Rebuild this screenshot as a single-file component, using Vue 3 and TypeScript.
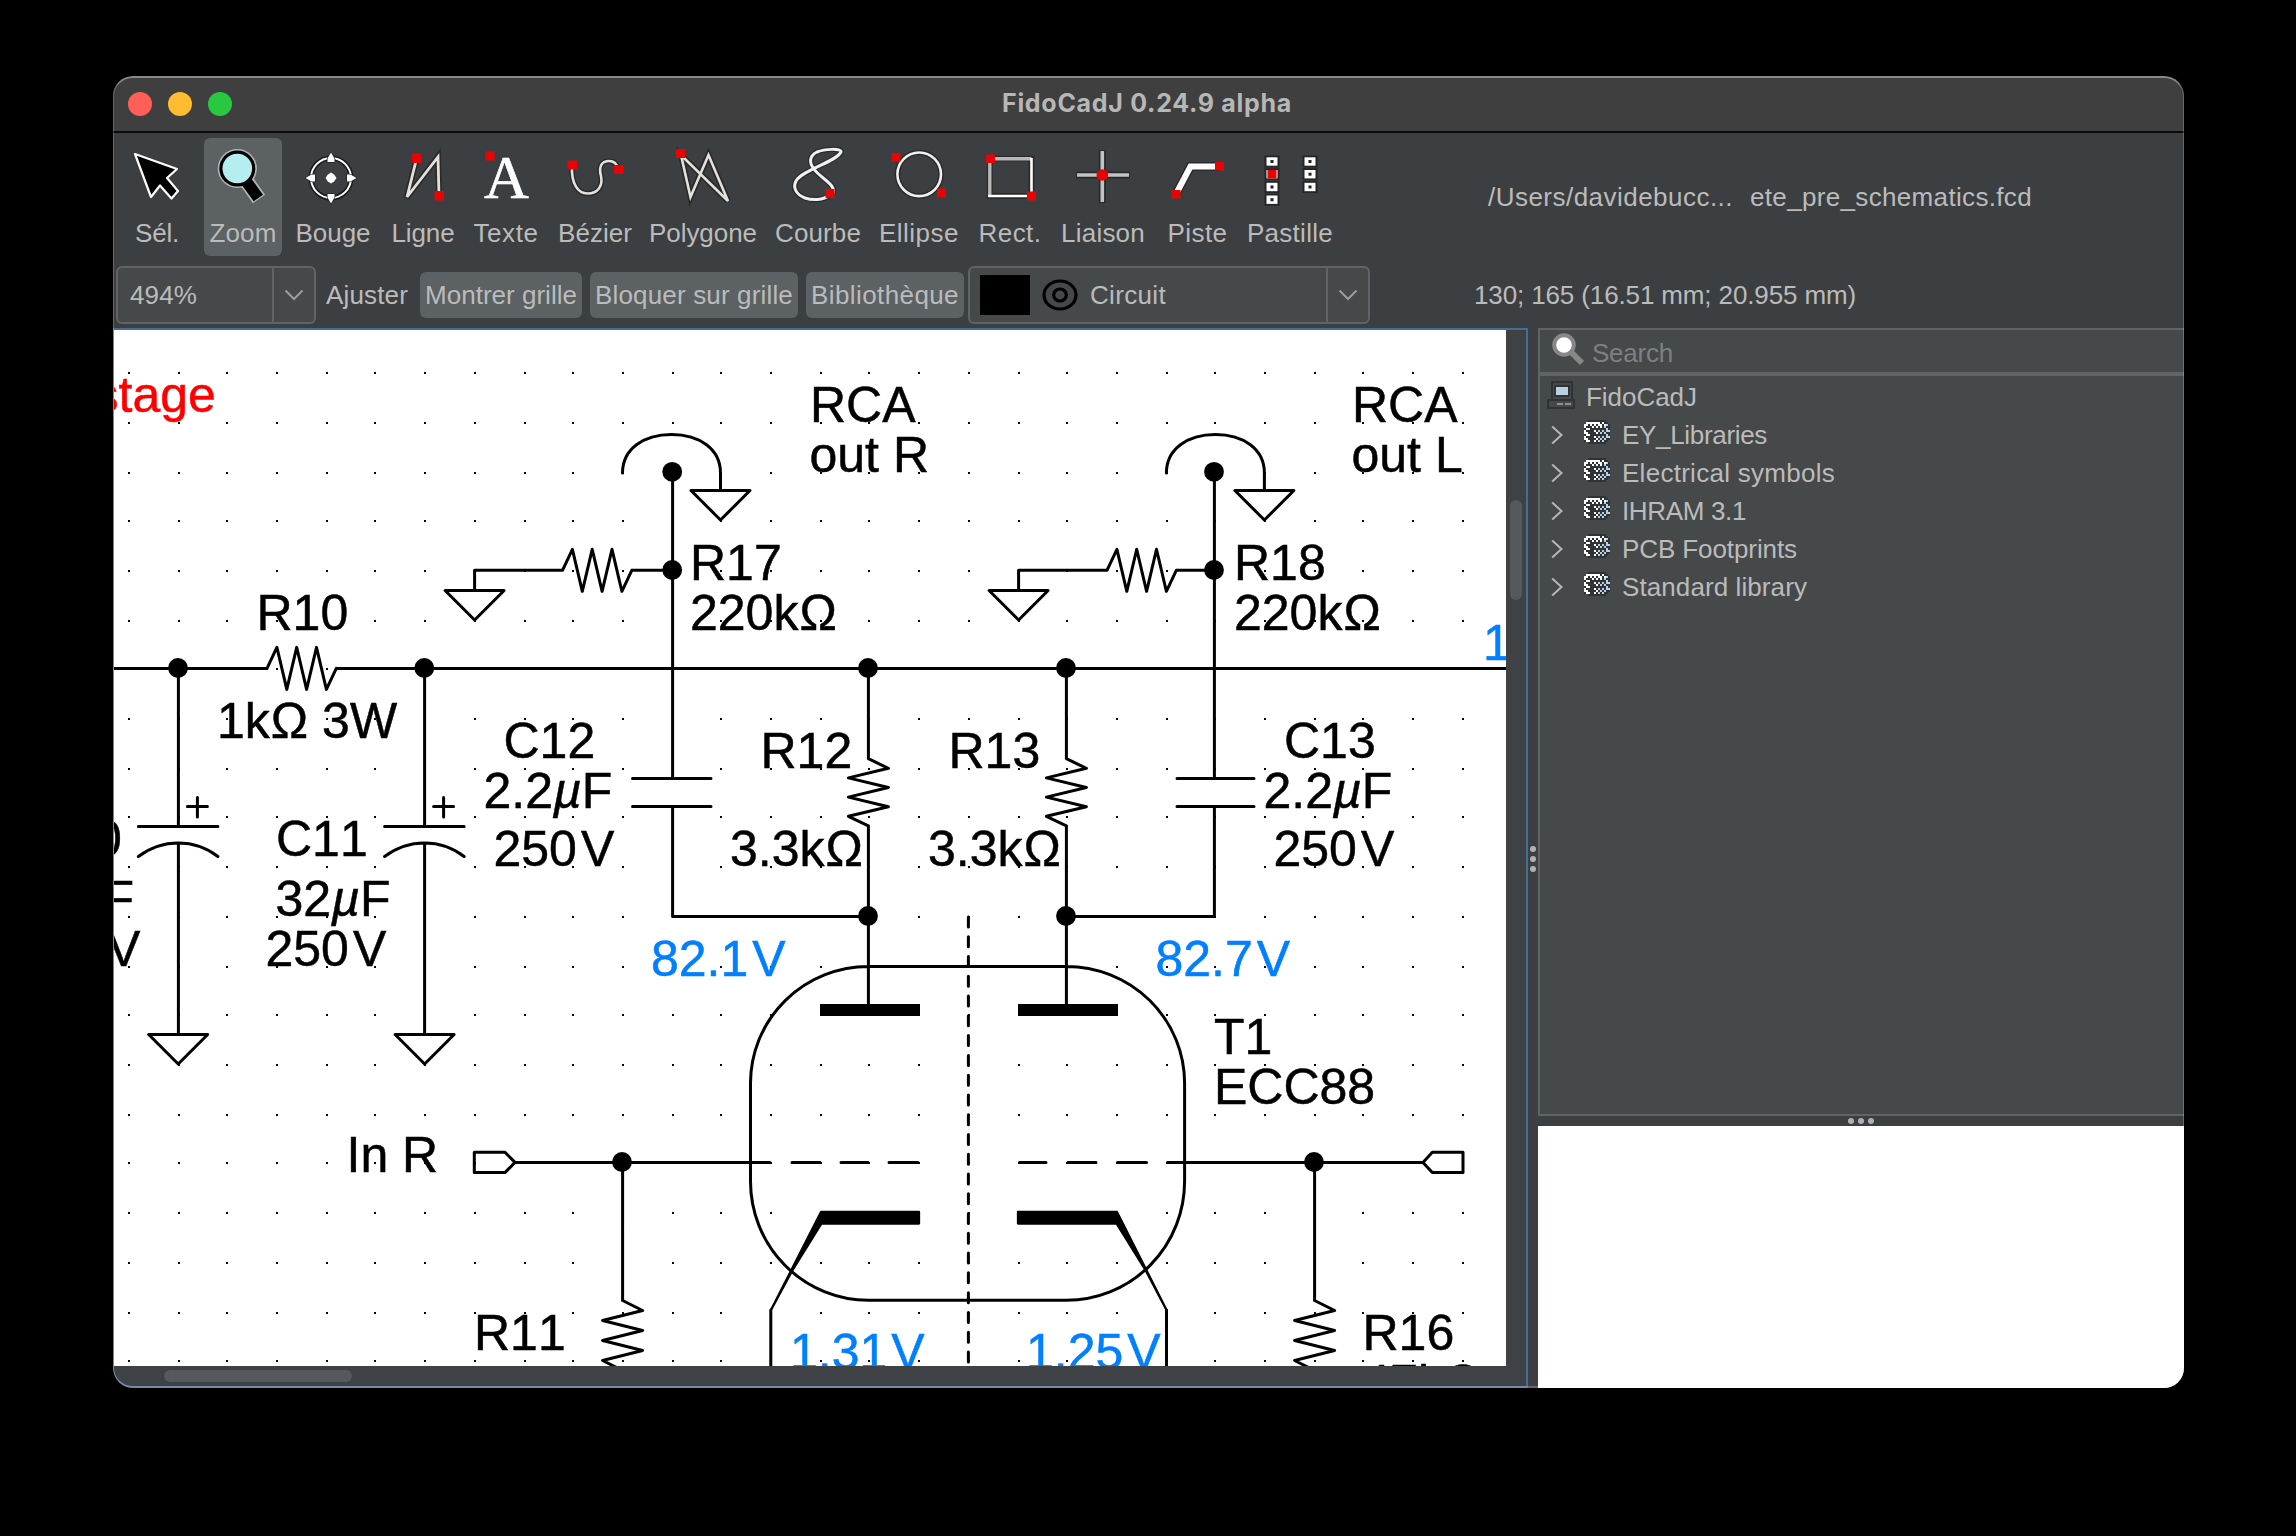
<script setup lang="ts">
import type { Directive } from 'vue'

interface Tool { name: string; w: number; gap: number; cx: number; tw: number; active?: boolean }
interface Label { t: string; x: number; y: number; c?: string }

// Adjusts tracking so that a caption occupies the given advance width.
const vFit: Directive<HTMLElement, number> = {
  mounted(el, { value }) {
    const n = (el.textContent ?? '').length
    const natural = el.getBoundingClientRect().width
    if (n > 1) el.style.letterSpacing = `${(value - natural) / n}px`
  },
}

const tools: Tool[] = [
  { name: 'Sél.', w: 54, gap: 17, cx: 157, tw: 44 },
  { name: 'Zoom', w: 78, gap: 20, cx: 243, tw: 67, active: true },
  { name: 'Bouge', w: 84, gap: 9, cx: 333, tw: 75 },
  { name: 'Ligne', w: 72, gap: 12, cx: 423, tw: 63 },
  { name: 'Texte', w: 76, gap: 9, cx: 506, tw: 65 },
  { name: 'Bézier', w: 84, gap: 9, cx: 595, tw: 74 },
  { name: 'Polygone', w: 116, gap: 8, cx: 703, tw: 108 },
  { name: 'Courbe', w: 96, gap: 9, cx: 818, tw: 86 },
  { name: 'Ellipse', w: 90, gap: 8, cx: 919, tw: 80 },
  { name: 'Rect.', w: 72, gap: 10, cx: 1010, tw: 63 },
  { name: 'Liaison', w: 92, gap: 11, cx: 1103, tw: 84 },
  { name: 'Piste', w: 69, gap: 14, cx: 1197, tw: 60 },
  { name: 'Pastille', w: 96, gap: 10, cx: 1290, tw: 86 },
]

const pads = [[1272, 160.5], [1272, 173.2], [1272, 186], [1272, 198.7], [1310, 160.5], [1310, 173.2], [1310, 186]]

const libs = [
  { name: 'EY_Libraries', w: 145 },
  { name: 'Electrical symbols', w: 213 },
  { name: 'IHRAM 3.1', w: 124 },
  { name: 'PCB Footprints', w: 175 },
  { name: 'Standard library', w: 185 },
]

const stack = [
  '..DDDDDDDDD..',
  '.WWWWWWWDWDD.',
  'WWDWDWDWWDWBD',
  'WDDDWDWDWDBDD',
  'DWWDDDDDDDDBD',
  'WDDDDWDBDBDBB',
  'WWDDDDWDBDBDD',
  'DWWDDDDDDDDBD',
  'WDDDDWDBDBDBB',
  'WWDDDDWDBDBDD',
  'DWWDDWDBDBDD.',
  '..DDDDDDDDD..',
]
const tint: Record<string, string> = { D: '#303335', W: '#ffffff', B: '#b8cfe5' }
const cells = stack.flatMap((row, y) =>
  [...row].map((ch, x) => ({ x: x * 2, y: y * 2, f: tint[ch] })).filter((c) => c.f),
)

const gridDots: { x: number; y: number }[] = []
for (let j = 0; j < 21; j++)
  for (let i = 0; i < 28; i++)
    gridDots.push({ x: 128 + 2 * Math.floor(24.7 * i + 0.45), y: 372 + 2 * Math.floor(24.7 * j + 0.7) })

const resH = (x: number, y: number) =>
  `M${x} ${y}` + [-21, 21, -21, 21, -21, 21, 0].map((d, i) => `L${x + 9.9 * (i + 1)} ${y + d}`).join('')
const resV = (x: number, y: number, step = 9.6) =>
  `M${x} ${y}` + [20, -20, 20, -20, 20, -20, 0].map((d, i) => `L${x + d} ${y + step * (i + 1)}`).join('')
const gnd = (x: number, y: number) => `M${x - 29.5} ${y}H${x + 29.5}L${x} ${y + 29.5}Z`
const rca = (l: number, r: number) => {
  const m = (l + r) / 2
  return `M${l} 473C${l} 449 ${m - 28} 434.5 ${m} 434.5S${r} 449 ${r} 473V490`
}
const polar = (x: number) =>
  `M${x} 668V826.5M${x - 40} 826.5H${x + 39.5}M${x - 40} 856.5Q${x - 22} 843 ${x} 843T${x + 39.5} 856.5M${x} 843V1034.5M${x + 9} 806.5H${x + 29}M${x + 19} 797.5V817`

const wires = [
  'M114 668.4H267', resH(267, 668.4), 'M336.6 668.4H1506',
  rca(622.5, 720.5), rca(1166.4, 1264.4),
  'M672.6 472V778.5M632.5 778.5H711M632.5 806.5H711M672.6 806.5V916.5H868',
  'M1214.4 472V778.5M1177 778.5H1254M1177 806.5H1254M1214.4 806.5V916.5H1066',
  gnd(720.5, 490.5), gnd(1264.4, 490.5),
  'M474.6 590V570.3H562.5', resH(562.5, 570.3), 'M632 570.3H672', gnd(474.6, 590.5),
  'M1018.6 590V570.3H1107', resH(1107, 570.3), 'M1176.5 570.3H1214', gnd(1018.6, 590.5),
  polar(178.4), gnd(178.2, 1034.5), polar(424.6), gnd(424.6, 1034.5),
  'M868.4 668V758.7', resV(868.4, 758.7), 'M868.4 826V1004',
  'M1066.4 668V758.7', resV(1066.4, 758.7), 'M1066.4 826V1004',
  'M868.4 966.4H1066.4A118.2 117 0 0 1 1184.6 1083V1181A118.2 119 0 0 1 1066.4 1300.3H868.4A118 119 0 0 1 750.5 1181V1083A118 117 0 0 1 868.4 966.4Z',
  'M474.3 1152.3H505L515 1162.4L505 1172.6H474.3ZM515 1162.4H770',
  'M792 1162.4H820M841 1162.4H868M889 1162.4H918M1019.5 1162.4H1046M1068 1162.4H1096M1117.5 1162.4H1146.5M1167.5 1162.4H1423',
  'M1463 1152.3H1432.3L1423 1162.4L1432.3 1172.6H1463Z',
  'M770.8 1310V1366M1166.5 1310V1366',
  'M622.6 1162V1300.5', resV(622.6, 1300.5, 10), 'M1314.6 1162V1300.5', resV(1314.6, 1300.5, 10),
].join('')

const nodes = [[672.2, 471.8], [672.2, 570], [1214, 471.8], [1214, 570], [178, 668], [424.3, 668], [868, 668], [1066, 668],
  [868, 916], [1066, 916], [622, 1162], [1314, 1162]]

const B = '#007fff'
const labels: Label[] = [
  { t: 'stage', x: 93.5, y: 412, c: '#ff0000' },
  { t: 'RCA', x: 810, y: 422 }, { t: 'out R', x: 809.5, y: 472 },
  { t: 'RCA', x: 1352, y: 422 }, { t: 'out L', x: 1351.5, y: 472 },
  { t: 'R17', x: 690, y: 580 }, { t: '220kΩ', x: 690, y: 630 },
  { t: 'R18', x: 1234, y: 580 }, { t: '220kΩ', x: 1234, y: 630 },
  { t: 'R10', x: 256.5, y: 630 }, { t: '1kΩ 3W', x: 217, y: 738 },
  { t: 'C12', x: 503.5, y: 758 }, { t: '2.2µF', x: 483.5, y: 808 }, { t: '250V', x: 493.5, y: 866 },
  { t: 'C11', x: 276, y: 856 }, { t: '32µF', x: 275.5, y: 916 }, { t: '250V', x: 265.5, y: 966 },
  { t: 'C10', x: 30, y: 856 }, { t: '32µF', x: 19, y: 916 }, { t: '250V', x: 19.5, y: 966 },
  { t: 'R12', x: 760.5, y: 768 }, { t: '3.3kΩ', x: 730, y: 866 },
  { t: 'R13', x: 948.5, y: 768 }, { t: '3.3kΩ', x: 928, y: 866 },
  { t: 'C13', x: 1284, y: 758 }, { t: '2.2µF', x: 1263.5, y: 808 }, { t: '250V', x: 1273.5, y: 866 },
  { t: '82.1V', x: 651, y: 976, c: B }, { t: '82.7V', x: 1155.5, y: 976, c: B },
  { t: 'T1', x: 1214, y: 1054 }, { t: 'ECC88', x: 1214, y: 1104 },
  { t: 'In R', x: 346.5, y: 1172 }, { t: 'R11', x: 474, y: 1350 }, { t: 'R16', x: 1362.5, y: 1350 },
  { t: '47kΩ', x: 1362.5, y: 1400 }, { t: '1.31V', x: 790, y: 1369, c: B }, { t: '1.25V', x: 1026, y: 1369, c: B },
  { t: '1', x: 1483, y: 660, c: B },
]
const split = (t: string) => t.split(/([µVΩ])/).filter((s) => s)
const shift = (s: string) => (s === 'V' ? 4 : s === 'Ω' ? 1 : 0)
</script>

<template>
  <div class="desktop">
    <div class="window">
      <header class="titlebar">
        <i class="light red"></i><i class="light amber"></i><i class="light green"></i>
        <h1><span v-fit="290">FidoCadJ 0.24.9 alpha</span></h1>
      </header>

      <div class="tools">
        <button v-for="t in tools" :key="t.name" class="tool" :class="{ active: t.active }"
          :style="{ width: t.w + 'px', marginLeft: t.gap + 'px' }">
          <svg class="ticon" width="68" height="68" :viewBox="`${t.cx - 34} 140 68 68`">
            <path v-if="t.name === 'Sél.'" d="M135 153L177 168L167 177L178 190L171.5 197.5L160 184.5L151 196Z" fill="#000" stroke="#fff" stroke-width="2.2" stroke-linejoin="round" />
            <g v-else-if="t.name === 'Zoom'">
              <path d="M247 181L259 198" stroke="#b4b4b4" stroke-width="15" />
              <circle cx="237.3" cy="167.5" r="19.6" fill="#b4b4b4" />
              <circle cx="237.3" cy="167.5" r="18" fill="#000" />
              <path d="M246 180L258.3 197" stroke="#000" stroke-width="11.5" />
              <circle cx="237.3" cy="167.5" r="14.8" fill="#b4eeee" />
            </g>
            <g v-else-if="t.name === 'Bouge'">
              <circle cx="331" cy="177" r="20" fill="none" stroke="#191b1c" stroke-width="5" />
              <circle cx="331" cy="177" r="20" fill="none" stroke="#fff" stroke-width="2" />
              <path d="M331 151.500l3.500 6v3.500h-7v-3.500zM331 202.500l3.500-6v-3.500h-7v3.500zM305.500 177l6-3.500h3.500v7h-3.500zM356.500 177l-6-3.500h-3.500v7h3.500z" fill="#fff" stroke="#191b1c" stroke-width="1.200" paint-order="stroke" />
              <path d="M331 171.500l3.300 2.200 2.200 3.300-2.200 3.300-3.300 2.200-3.300-2.200-2.200-3.300 2.200-3.300z" fill="#fff" />
            </g>
            <g v-else-if="t.name === 'Ligne'" fill="none">
              <path d="M416.500 158L406.500 197L438 155.500L439 195" stroke="#2a2a2a" stroke-width="6" />
              <path d="M416.500 158L407 196L438 156L439 195" stroke="#e4e0dc" stroke-width="2.800" />
              <path d="M412 152.500h9.500v9.500h-9.500zM434.500 190h9.500v9.500h-9.500z" fill="#e80404" />
            </g>
            <g v-else-if="t.name === 'Texte'">
              <text x="484" y="197" class="serif">A</text>
              <path d="M485.500 150.500h9v9h-9z" fill="#e80404" />
            </g>
            <g v-else-if="t.name === 'Bézier'" fill="none">
              <path d="M572 164C571 183 578 192.500 587.500 192.500C598 192.500 603 185 601 175C598 164 603 160 609 160C614 160 617 163 618 168" stroke="#2a2a2a" stroke-width="5.500" />
              <path d="M572 164C571 183 578 192.500 587.500 192.500C598 192.500 603 185 601 175C598 164 603 160 609 160C614 160 617 163 618 168" stroke="#e4e0dc" stroke-width="2.600" />
              <path d="M567.500 159.500h9.500v9h-9.500zM614 164h9.500v9h-9.500z" fill="#e80404" />
            </g>
            <g v-else-if="t.name === 'Polygone'" fill="none">
              <path d="M681 154L690.500 196L708.500 154L728 200Z" stroke="#2a2a2a" stroke-width="6" />
              <path d="M681 154L690.500 196L708.500 154L728 200Z" stroke="#e4e0dc" stroke-width="2.600" />
              <path d="M676 148h9v9h-9z" fill="#e80404" />
            </g>
            <g v-else-if="t.name === 'Courbe'" fill="none">
              <path d="M830 194C823 199.500 812 199.500 805 197C795 193 793 186 796 180C802 169 836 161 841 151C842 147 824 148 817 151C809 155 809 162 814 168C820 177 836 183 833 192" stroke="#2a2a2a" stroke-width="5.500" />
              <path d="M830 194C823 199.500 812 199.500 805 197C795 193 793 186 796 180C802 169 836 161 841 151C842 147 824 148 817 151C809 155 809 162 814 168C820 177 836 183 833 192" stroke="#f0f0f0" stroke-width="3" />
              <path d="M825.500 188h9v9h-9z" fill="#e80404" />
            </g>
            <g v-else-if="t.name === 'Ellipse'" fill="none">
              <circle cx="919.200" cy="173.300" r="21.800" stroke="#2a2a2a" stroke-width="5.500" />
              <circle cx="919.200" cy="173.300" r="21.800" stroke="#f0f0f0" stroke-width="2.600" />
              <path d="M891.500 152h9v8.500h-9zM937 187.500h9v9h-9z" fill="#e80404" />
            </g>
            <g v-else-if="t.name === 'Rect.'" fill="none">
              <path d="M989.800 157.700H1031.500V195H989.800Z" stroke="#2a2a2a" stroke-width="5.800" />
              <path d="M989.800 195V157.700H1031.500" stroke="#b8b8b8" stroke-width="3.400" />
              <path d="M1031.500 157V195H988" stroke="#fff" stroke-width="2.600" />
              <path d="M986 153.500h9v8.500h-9zM1027 190.500h9v9h-9z" fill="#e80404" />
            </g>
            <g v-else-if="t.name === 'Liaison'">
              <path d="M1076 174H1130M1102.300 149V202" stroke="#26282a" stroke-width="7" />
              <path d="M1077 174H1129M1102.300 150V201" stroke="#c2c2c2" stroke-width="3.600" />
              <circle cx="1102.300" cy="174" r="5.800" fill="#e80404" />
            </g>
            <g v-else-if="t.name === 'Piste'" fill="none">
              <path d="M1175 193L1189.500 165.500H1219" stroke="#2a2a2a" stroke-width="9" />
              <path d="M1175 193L1189.500 165.500H1219" stroke="#fff" stroke-width="6" />
              <path d="M1170.500 189h9v8.500h-9zM1214 161h9v8.500h-9z" fill="#e80404" />
            </g>
            <g v-else>
              <g v-for="(p, i) in pads" :key="i">
                <rect :x="p[0] - 7.500" :y="p[1] - 6" width="15" height="12" fill="#232526" />
                <rect :x="p[0] - 5.500" :y="p[1] - 4.200" width="11" height="8.400" fill="#fff" />
                <rect v-if="i === 1" :x="p[0] - 4.500" :y="p[1] - 4.200" width="9" height="8.400" fill="#e80404" />
                <rect v-else :x="p[0] - 1.500" :y="p[1] - 1.500" width="3" height="3" fill="#222" />
              </g>
            </g>
          </svg>
          <span v-fit="t.tw">{{ t.name }}</span>
        </button>
        <div class="path"><span v-fit="245">/Users/davidebucc...</span><span v-fit="282">ete_pre_schematics.fcd</span></div>
      </div>

      <div class="options">
        <div class="combo zoomsel"><span v-fit="67" class="val">494%</span>
          <div class="drop"><svg width="20" height="12"><path d="M1.500 1.500L10 10L18.500 1.500" /></svg></div>
        </div>
        <span v-fit="82" class="fitbtn">Ajuster</span>
        <button class="tog grid"><span v-fit="152">Montrer grille</span></button>
        <button class="tog snap"><span v-fit="198">Bloquer sur grille</span></button>
        <button class="tog libr"><span v-fit="148">Bibliothèque</span></button>
        <div class="combo layer">
          <i class="swatch"></i>
          <svg class="eye" width="38" height="34" viewBox="-19 -17 38 34"><ellipse rx="16" ry="14" /><ellipse rx="6.300" ry="6" /></svg>
          <span v-fit="76">Circuit</span>
          <div class="drop"><svg width="20" height="12"><path d="M1.500 1.500L10 10L18.500 1.500" /></svg></div>
        </div>
        <span v-fit="382" class="coords">130; 165 (16.51 mm; 20.955 mm)</span>
      </div>

      <main class="work">
        <section class="editor">
          <div class="row">
            <svg class="canvas" width="1392" height="1036" viewBox="114 330 1392 1036">
              <rect x="114" y="330" width="1392" height="1036" fill="#fff" />
              <rect v-for="(d, i) in gridDots" :key="i" :x="d.x" :y="d.y" width="2" height="2" />
              <path :d="wires" class="wire" />
              <path d="M968.400 917V1366" class="wire" stroke-dasharray="10 9.770" />
              <path d="M820 1004H920V1016H820ZM1018 1004H1118V1016H1018Z" />
              <path d="M821 1212H919V1223.500H821.500L792 1271L771 1310ZM1117 1212H1018V1223.500H1116.500L1146 1271L1166.500 1310Z" class="wire solid" />
              <circle v-for="(n, i) in nodes" :key="i" :cx="n[0]" :cy="n[1]" r="9.900" />
              <text v-for="(l, i) in labels" :key="i" :x="l.x" :y="l.y" :fill="l.c ?? '#000'" :stroke="l.c ?? '#000'" class="lab"><tspan
                v-for="(s, k) in split(l.t)" :key="k" :dx="shift(s)" :class="{ it: s === 'µ' }">{{ s }}</tspan></text>
            </svg>
            <div class="vbar"><i></i></div>
          </div>
          <div class="hbar"><i></i></div>
        </section>
        <div class="vsplit"><i></i><i></i><i></i></div>
        <aside class="side">
          <div class="search">
            <svg width="26" height="30" viewBox="1551 333 34 36"><path d="M1569 351L1582 364" stroke="#878787" stroke-width="6" /><circle cx="1564" cy="346" r="9.800" fill="#fff" stroke="#878787" stroke-width="4" /></svg>
            <span v-fit="81">Search</span>
          </div>
          <div class="tree">
            <div class="node root">
              <svg width="28" height="28" shape-rendering="crispEdges">
                <path d="M5 18V1H25V18M1 19H27V27H1Z" fill="none" stroke="#303335" stroke-width="2" />
                <rect x="7" y="4" width="16" height="12" rx="2" fill="#303335" /><rect x="9" y="6" width="12" height="8" fill="#b8cfe5" />
                <path d="M10 23H16M18 23H24" stroke="#8b9097" stroke-width="2" />
              </svg>
              <span v-fit="111">FidoCadJ</span>
            </div>
            <div v-for="l in libs" :key="l.name" class="node">
              <svg class="arrow" width="12" height="20"><path d="M1.200 1.500L10.500 10L1.200 18.500" /></svg>
              <svg class="db" width="26" height="24" shape-rendering="crispEdges"><rect v-for="(c, i) in cells" :key="i" :x="c.x" :y="c.y" width="2" height="2" :fill="c.f" /></svg>
              <span v-fit="l.w">{{ l.name }}</span>
            </div>
          </div>
          <div class="hsplit"><i></i><i></i><i></i></div>
          <div class="preview"></div>
        </aside>
      </main>
    </div>
  </div>
</template>

<style>
body { background: #000; overflow: hidden; }
</style>

<style scoped>
* { box-sizing: border-box; }
.desktop { width: 2296px; height: 1536px; background: #000; padding: 76px 0 0 113px; font: 26px/30px "Liberation Sans", Arial, sans-serif; color: #bbb; }
.window { position: relative; width: 2071px; height: 1312px; border-radius: 20px; overflow: hidden; background: #3c3f41; display: flex; flex-direction: column; }
.window::after { content: ""; position: absolute; inset: 0; border: 2px solid rgba(255, 255, 255, .22); border-top-color: rgba(255, 255, 255, .38); border-left-width: 1px; border-right-width: 1px; border-radius: 20px; pointer-events: none; }
.titlebar { height: 57px; flex: none; background: #403f3f; border-bottom: 2px solid #0a0a0a; display: flex; align-items: center; padding: 1px 0 0 15px; gap: 16px; }
.light { width: 24px; height: 24px; border-radius: 50%; }
.red { background: #ff5f57; }
.amber { background: #febc2e; }
.green { background: #28c840; }
h1 { margin: -3px 0 0; flex: 1; padding-left: 754px; font: 700 25px/30px Inter, sans-serif; color: #b7b7b6; }
span { display: inline-block; white-space: pre; }
button { border: 0; background: none; color: inherit; font: inherit; padding: 0; }
.tools { height: 123px; flex: none; display: flex; padding-top: 5px; }
.tool { height: 118px; flex: none; border-radius: 6px; display: flex; flex-direction: column; align-items: center; justify-content: flex-start; padding-top: 3px; }
.tool span { margin-top: 9px; }
.active { background: #5c6164; }
.ticon { display: block; overflow: visible; flex: none; }
.serif { font: 62px "Liberation Serif", serif; fill: #fff; stroke: #fff; stroke-width: .6; }
.path { margin: 44px 0 0 150px; display: flex; gap: 17px; }
.options { height: 72px; flex: none; display: flex; align-items: center; padding: 6px 0 0 3px; }
.combo { height: 58px; flex: none; border: 2px solid #616466; border-radius: 6px; background: #45494a; display: flex; align-items: center; align-self: flex-start; margin-top: 4px; }
.zoomsel { width: 200px; }
.val { margin-left: 12px; }
.drop { margin-left: auto; width: 42px; height: 100%; border-left: 2px solid #616466; display: flex; align-items: center; justify-content: center; }
.drop path { fill: none; stroke: #9a9da0; stroke-width: 2; }
.fitbtn { margin-left: 10px; }
.tog { height: 46px; flex: none; margin-left: 8px; background: #5c6164; border-radius: 6px; text-align: center; }
.grid { width: 162px; margin-left: 12px; }
.snap { width: 208px; }
.libr { width: 158px; }
.layer { width: 402px; margin-left: 4px; }
.swatch { width: 50px; height: 40px; background: #000; margin-left: 10px; }
.eye { margin: 0 11px; fill: none; stroke: #000; stroke-width: 3.2; }
.coords { margin-left: 104px; }
.work { flex: 1; display: flex; min-height: 0; }
.editor { width: 1415px; border: 2px solid #466d94; border-left-width: 1px; border-bottom-color: #4e6b92; display: flex; flex-direction: column; background: #3e4244; border-bottom-left-radius: 20px; }
.row { display: flex; }
.canvas { display: block; }
.wire { fill: none; stroke: #000; stroke-width: 3; stroke-linecap: round; stroke-linejoin: round; }
.solid { fill: #000; stroke-width: 2.3; }
.lab { font: 50px "Liberation Sans", Arial, sans-serif; font-kerning: none; stroke-width: .5; }
.it { font-style: italic; }
.vbar { flex: 1; padding: 170px 0 0 4px; }
.vbar i { display: block; width: 12px; height: 100px; border-radius: 6px; background: #55595c; }
.hbar { padding: 4px 0 0 50px; }
.hbar i { display: block; width: 188px; height: 12px; border-radius: 6px; background: #55595c; }
.vsplit { width: 10px; display: flex; flex-direction: column; align-items: center; gap: 4px; padding-top: 518px; }
.vsplit i, .hsplit i { width: 6px; height: 6px; border-radius: 50%; background: #afb1b3; flex: none; }
.side { flex: 1; display: flex; flex-direction: column; }
.search { height: 46px; flex: none; border: 2px solid #616466; border-right: 0; background: #45494a; display: flex; align-items: center; color: #7d8082; }
.search svg { width: 34px; height: 36px; margin: -2px 0 0 11px; }
.search span { margin-left: 7px; margin-top: 4px; }
.tree { height: 742px; flex: none; border: 2px solid #616466; border-right: 0; background: #45494a; }
.node { height: 38px; display: flex; align-items: center; padding-left: 11px; }
.node span { margin-top: 2px; }
.root { padding-left: 7px; margin-top: 1px; }
.root svg { margin-top: -2px; }
.root span { margin-left: 11px; }
.arrow { fill: none; stroke: #b4b6b8; stroke-width: 2; margin-top: 2px; }
.db { margin: -4px 12px 0 21px; }
.hsplit { height: 10px; display: flex; align-items: center; justify-content: center; gap: 4px; }
.preview { flex: 1; background: #fff; }
</style>
